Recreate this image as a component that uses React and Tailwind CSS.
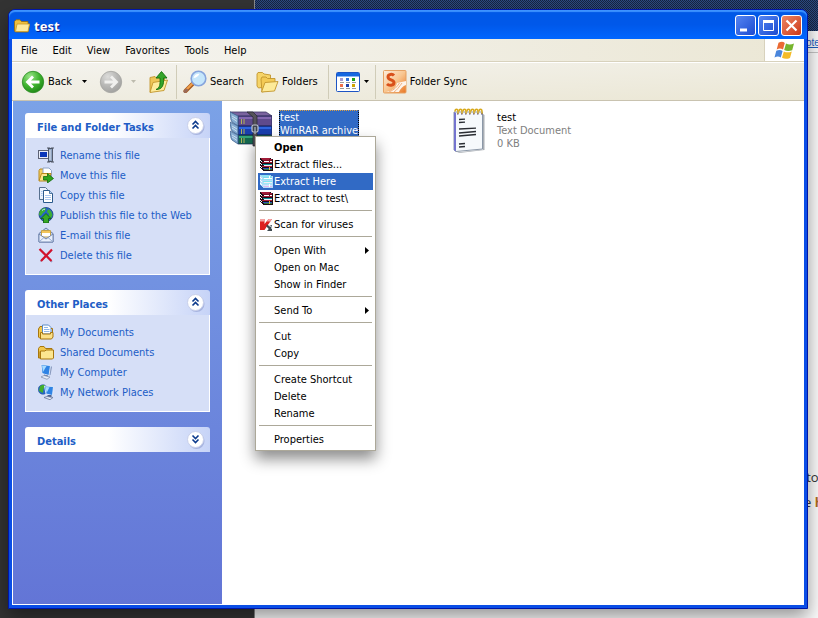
import React from 'react';

const tasks = [
  { label: 'Rename this file', icon: RenameIcon },
  { label: 'Move this file', icon: MoveIcon },
  { label: 'Copy this file', icon: CopyIcon },
  { label: 'Publish this file to the Web', icon: PublishIcon },
  { label: 'E-mail this file', icon: MailIcon },
  { label: 'Delete this file', icon: DeleteIcon },
];

const places = [
  { label: 'My Documents', icon: DocumentsIcon },
  { label: 'Shared Documents', icon: SharedIcon },
  { label: 'My Computer', icon: ComputerIcon },
  { label: 'My Network Places', icon: NetworkIcon },
];

const menuGroups = [
  [
    { label: 'Open', bold: true },
    { label: 'Extract files...', icon: BooksIcon },
    { label: 'Extract Here', icon: BooksIcon, active: true },
    { label: 'Extract to test\\', icon: BooksIcon },
  ],
  [{ label: 'Scan for viruses', icon: KasperskyIcon }],
  [{ label: 'Open With', submenu: true }, { label: 'Open on Mac' }, { label: 'Show in Finder' }],
  [{ label: 'Send To', submenu: true }],
  [{ label: 'Cut' }, { label: 'Copy' }],
  [{ label: 'Create Shortcut' }, { label: 'Delete' }, { label: 'Rename' }],
  [{ label: 'Properties' }],
];

/* ---------- small icons (16x16) ---------- */

function RenameIcon() {
  return (
    <svg width="16" height="16" viewBox="0 0 16 16" className="shrink-0">
      <rect x="0.5" y="3.5" width="10" height="8" fill="#e8ecf8" stroke="#5d6376" />
      <rect x="2" y="5" width="7" height="5" fill="#0a36b8" />
      <path d="M9 1h2.500l1 1 1-1H16M9 15h2.500l1-1 1 1H16" fill="none" stroke="#4b5260" strokeWidth="1.200" />
      <rect x="10.500" y="1.500" width="4" height="13" fill="#8fa2bf" stroke="#4b5260" strokeWidth="0.9" />
      <path d="M12 3v10" stroke="#dfe8f5" strokeWidth="1" />
    </svg>
  );
}

function MoveIcon() {
  return (
    <svg width="16" height="16" viewBox="0 0 16 16" className="shrink-0">
      <path d="M1 3.500l1-1.500h4l1 1.500v10H1z" fill="#f3cf62" stroke="#b98a1c" />
      <path d="M5 1h6l2.500 2.500V11H5z" fill="#fff" stroke="#8fa3c4" />
      <path d="M1 14l2.500-7.500H13l-2 7.500z" fill="#fbe58d" stroke="#b98a1c" />
      <path d="M5.500 9.500h4V6.500l6 5-6 4.500v-3h-4z" fill="#2fa51e" stroke="#136b0c" strokeWidth="0.8" />
    </svg>
  );
}

function CopyIcon() {
  return (
    <svg width="16" height="16" viewBox="0 0 16 16" className="shrink-0">
      <path d="M1.500 0.500h6l2 2v10h-8z" fill="#e9f1fd" stroke="#56708f" />
      <path d="M5.500 3.500h6l3 3v9h-9z" fill="#fff" stroke="#2c5a8c" />
      <path d="M11.500 3.500v3h3" fill="#bcd4f2" stroke="#2c5a8c" strokeWidth="0.8" />
      <path d="M7 8.500h6M7 10.500h6M7 12.500h6M3 4.500h1.500M3 6.500h1.500M3 8.500h1.500" stroke="#a9c6ee" />
    </svg>
  );
}

function PublishIcon() {
  return (
    <svg width="16" height="16" viewBox="0 0 16 16" className="shrink-0">
      <circle cx="8" cy="7.500" r="7" fill="#2563c9" stroke="#173c7c" strokeWidth="0.8" />
      <path d="M3 2.500c2-1.500 4-2 5-1l-1 3-2 1.500-2 3-2-1c0-2 .8-4.200 2-5.500zM10 2l3 2 1.500 4-2 4-2-2 .500-3-2-2z" fill="#3fae35" />
      <path d="M4 3.500c1-.9 2-1.300 3-1.300" stroke="#bfe6ff" fill="none" />
      <path d="M8 6.500l5 5h-2.500V16h-5v-4.500H3z" fill="#36a825" stroke="#0f5f0b" strokeWidth="0.8" />
    </svg>
  );
}

function MailIcon() {
  return (
    <svg width="16" height="16" viewBox="0 0 16 16" className="shrink-0">
      <path d="M1 6.500L8 1l7 5.500V15H1z" fill="#c3d6f5" stroke="#6a7fa8" />
      <path d="M3.500 3.500h9V10h-9z" fill="#fff" stroke="#c4a24d" />
      <path d="M4 4h8v2H4z" fill="#f3c65b" />
      <path d="M1 7l7 5 7-5v8H1z" fill="#eaf1fd" stroke="#6a7fa8" strokeWidth="0.9" />
      <path d="M1.500 14.500L6 10.500M14.500 14.500L10 10.500" stroke="#8ea5cf" strokeWidth="0.9" />
    </svg>
  );
}

function DeleteIcon() {
  return (
    <svg width="16" height="16" viewBox="0 0 16 16" className="shrink-0">
      <path d="M3 3l11 12M13.500 3.500L2.500 14.500" stroke="#8f9bc4" strokeWidth="1.500" />
      <path d="M1.500 2l12 12M14 2.500L3 14" stroke="#d3122b" strokeWidth="2.200" />
    </svg>
  );
}

function DocumentsIcon() {
  return (
    <svg width="16" height="16" viewBox="0 0 16 16" className="shrink-0">
      <path d="M.5 5l1.500-2.500h3V14H1.500l-1-1z" fill="#f1c84e" stroke="#a8770e" />
      <path d="M4.500 1h6L13 3.500V10H4.500z" fill="#fff" stroke="#5a8ac6" />
      <path d="M6 3.500h4M6 5.500h5.500M6 7.500h5.500" stroke="#8fb6e8" />
      <path d="M2.500 8.500h2v1.500h8V8.500H15V13l-1.500 2H2.500z" fill="#fbe089" stroke="#a8770e" />
      <path d="M13 4.500h1.500v4" fill="none" stroke="#a8770e" />
    </svg>
  );
}

function SharedIcon() {
  return (
    <svg width="16" height="16" viewBox="0 0 16 16" className="shrink-0">
      <path d="M.5 4.500L2 2.500h4l1.500 2h6.500v3H2V14H.5z" fill="#f1c84e" stroke="#a8770e" />
      <path d="M2.500 7h4.500l1-1h7.500v8l-1 1h-12z" fill="#fce690" stroke="#a8770e" />
    </svg>
  );
}

function ComputerIcon() {
  return (
    <svg width="16" height="16" viewBox="0 0 16 16" className="shrink-0">
      <path d="M12.500 1.500L14 3l-1.500 8-2 .500z" fill="#8798bd" />
      <path d="M3 .500l9.500 1-1.500 10-7-2z" fill="#2f83e4" stroke="#e6eefb" strokeWidth="0.9" />
      <path d="M4 1.500l4.500.500L5 8z" fill="#a9dcff" />
      <path d="M6 10.500l4 1v2l-4-.500z" fill="#6478a8" />
      <path d="M3 13l3-1.500 6 1.500-3 2.300z" fill="#e9eef8" stroke="#7d8cab" strokeWidth="0.7" />
    </svg>
  );
}

function NetworkIcon() {
  return (
    <svg width="16" height="16" viewBox="0 0 16 16" className="shrink-0">
      <circle cx="5" cy="5.500" r="4.800" fill="#2768c8" stroke="#1b4a90" strokeWidth="0.5" />
      <path d="M2 2.500c1.500-2 4.500-2 6 0L5.500 4.500 5 9 1 7z" fill="#42b02c" />
      <path d="M6.500 2l9 .500-1 9-6.500-1.500z" fill="#2f83e4" stroke="#e6eefb" strokeWidth="0.9" />
      <path d="M7.500 3l4 .300-3 5.700z" fill="#a9dcff" />
      <path d="M9.500 11h4v2.500h-4z" fill="#4f6290" />
      <path d="M6 13.500l3-1 6 1-3 2.200z" fill="#e9eef8" stroke="#66769a" strokeWidth="0.8" />
    </svg>
  );
}

function BooksIcon({ active }) {
  const [cover, spine, second, third, base] = active
    ? ['#8fe3f4', '#7fd8ee', '#7fe6f0', '#e3b5f0', '#b8dcf8']
    : ['#a01c38', '#7a1026', '#128f98', '#2f7a3c', '#1c0d14'];
  return (
    <svg width="14" height="14" viewBox="0 0 14 14" className="shrink-0" shapeRendering="crispEdges">
      <path d="M0 0h10l1 1h2v12H3v-1H2v-1H1v-1H0z" fill={base} />
      <path d="M1 0h9v1h2v1H2V1H1z" fill={cover} />
      <rect x="3" y="2" width="9" height="1" fill={spine} />
      <rect x="4" y="3" width="8" height="1" fill="#fff" />
      <rect x="2" y="4" width="10" height="1" fill={cover} />
      <rect x="3" y="6" width="9" height="1" fill={second} />
      <rect x="4" y="7" width="8" height="1" fill="#f3eef4" />
      <rect x="2" y="8" width="10" height="1" fill={active ? '#9fe8f6' : '#b02440'} />
      <rect x="3" y="10" width="9" height="1" fill={active ? '#cfeaff' : '#2f52b8'} />
      <rect x="4" y="11" width="8" height="1" fill={third} />
      <path d="M0 2h1v1h1v1H1V3H0zM0 5h1v1h1v1H1V6H0zM0 8h1v1h1v1H1V9H0z" fill="#fff" />
      <rect x="9" y="1" width="1" height="3" fill={active ? '#fff' : '#6c1024'} />
      <rect x="9" y="9" width="1" height="3" fill={active ? '#fff' : '#d8c24a'} />
    </svg>
  );
}

function KasperskyIcon() {
  return (
    <svg width="14" height="14" viewBox="0 0 14 14" className="shrink-0">
      <path d="M0 1h4.500v5L8.500 1h3.500L4.500 12H0z" fill="#dd1f1f" />
      <path d="M0 1h4.500v2.500H0zM8.500 1H12l-1.800 2.500H6.600z" fill="#f3a3a3" />
      <path d="M6 8l1.500-1.500L9 8l3-1v6H7l1.800-2z" fill="#3f4a50" />
      <path d="M9.500 8.500h2V11" fill="none" stroke="#b8c0c4" />
    </svg>
  );
}

/* ---------- window chrome icons ---------- */

function TitleFolder() {
  return (
    <svg width="16" height="14" viewBox="0 0 16 14" className="shrink-0">
      <path d="M.5 2.500L2 .800h4L7.500 2.500h6.500V5h1.500L14 13H1.500L.5 12z" fill="#eebf3d" stroke="#94690f" strokeWidth="0.8" />
      <path d="M1.500 12.500L3 5h12.500L14 12.500z" fill="#fdea9e" stroke="#c79a2a" strokeWidth="0.8" />
    </svg>
  );
}

function WindowsLogo() {
  return (
    <svg width="21" height="19" viewBox="0 0 21 19">
      <path d="M4.500 1.800C7 .500 9 .500 10.800 1.900L9 8.600C7 7.300 5 7.300 2.700 8.400z" fill="#ea6a33" />
      <path d="M12 2.500c2.500 1.400 5 1.300 8 .100L18.200 9.200c-3 1.200-5.500 1-8-.100z" fill="#77b52e" />
      <path d="M2.300 9.700c2.500-1.200 4.500-1 6.300.200L6.800 16.500C5 15.200 3 15.200.500 16.400z" fill="#4a86dc" />
      <path d="M9.800 10.400c2.500 1.300 5 1.200 8 0L16 17c-3 1.200-5.500 1.100-8-.200z" fill="#f5bb27" />
    </svg>
  );
}

function NavCircle({ forward }) {
  const id = forward ? 'fwd' : 'back';
  return (
    <svg width="24" height="24" viewBox="0 0 24 24" className="shrink-0">
      <defs>
        <radialGradient id={id} cx="0.35" cy="0.25" r="0.9">
          <stop offset="0" stopColor={forward ? '#dcdcda' : '#9be58a'} />
          <stop offset="0.5" stopColor={forward ? '#b6b6b4' : '#3fb32f'} />
          <stop offset="1" stopColor={forward ? '#9a9a98' : '#157a10'} />
        </radialGradient>
      </defs>
      <circle cx="12" cy="12" r="10.700" fill={`url(#${id})`} stroke={forward ? '#a5a5a1' : '#2a8a22'} strokeWidth="0.8" />
      <path
        d={forward ? 'M5.500 12H17M12 6.500l5.500 5.500-5.500 5.500' : 'M18.500 12H7M12 6.500L6.500 12l5.500 5.500'}
        fill="none"
        stroke={forward ? '#f0f0ee' : '#fff'}
        strokeWidth="2.800"
      />
    </svg>
  );
}

function UpFolder() {
  return (
    <svg width="21" height="24" viewBox="0 0 21 24" className="shrink-0">
      <path d="M2 7.500l5-1 1.500 1.500 8-1V19L2 22z" fill="#eec657" stroke="#c2952c" strokeWidth="0.9" />
      <path d="M2 22.500l3-10L19.500 10 16 20.500z" fill="#fdeb9b" stroke="#c2952c" strokeWidth="0.9" />
      <path d="M8 19.500c4-1.500 4.300-5 4-11.500H8L13.500 1.500l5.500 6.500h-3.500c.5 7-1 11.500-7.500 11.500z" fill="#35a52a" stroke="#14700f" strokeWidth="0.9" />
    </svg>
  );
}

function SearchIcon() {
  return (
    <svg width="24" height="24" viewBox="0 0 24 24" className="shrink-0">
      <path d="M2.500 21l8-8" stroke="#a3571c" strokeWidth="4" strokeLinecap="round" />
      <path d="M2.500 20.500l8-8" stroke="#f3a04a" strokeWidth="2.200" strokeLinecap="round" />
      <path d="M2 21.500l1.500-1.500" stroke="#9a6a58" strokeWidth="3" strokeLinecap="round" />
      <circle cx="15.500" cy="8.500" r="7.300" fill="#c5e6fb" stroke="#86a4dc" strokeWidth="1.600" />
      <path d="M10.500 8c.5-3 3-4.500 6-4.300-1 2.500-3.500 4.300-6 4.300z" fill="#fff" />
    </svg>
  );
}

function FoldersIcon() {
  return (
    <svg width="23" height="22" viewBox="0 0 23 22" className="shrink-0">
      <path d="M1 3l1-1.500h4.500L8 3l6.500 1v11L2.500 17 1 15z" fill="#f6d468" stroke="#c2952c" strokeWidth="0.9" />
      <path d="M5 8l1-2h4l1.500 1.500H19V18L6 21z" fill="#f3ca55" stroke="#c2952c" strokeWidth="0.9" />
      <path d="M5.500 21L9 11.500l13-1L18.500 20z" fill="#fdea98" stroke="#c2952c" strokeWidth="0.9" />
    </svg>
  );
}

function ViewsIcon() {
  const cells = ['#a89ad0', '#2f6fd6', '#19a01a', '#f0704a', '#1d3fa8', '#d0a400'];
  return (
    <svg width="24" height="20" viewBox="0 0 24 20" className="shrink-0">
      <rect x="0.5" y="0.5" width="23" height="19" rx="1" fill="#fff" stroke="#1d54c4" />
      <path d="M1 1h22v3.500H1z" fill="#1567e0" />
      {cells.map((color, i) => (
        <g key={color}>
          <rect x={4 + (i % 3) * 6} y={i < 3 ? 6 : 12} width="3" height="3" fill={color} />
          <rect x={4 + (i % 3) * 6} y={i < 3 ? 10 : 16} width="4" height="1" fill="#9a9a9a" />
        </g>
      ))}
    </svg>
  );
}

function FolderSyncIcon() {
  return (
    <svg width="24" height="24" viewBox="0 0 24 24" className="shrink-0">
      <defs>
        <linearGradient id="sync" x1="0" y1="0" x2="1" y2="1">
          <stop offset="0" stopColor="#fdeedd" />
          <stop offset="0.5" stopColor="#f9c690" />
          <stop offset="1" stopColor="#e97520" />
        </linearGradient>
      </defs>
      <rect x="0.5" y="0.5" width="22.500" height="22.500" rx="1" fill="url(#sync)" stroke="#e5a163" />
      <path d="M3 22c6-1 10-4 11-9l9-2v4c-3 1-6 4-7 7z" fill="#fdf3ea" />
      <path d="M6 22c5-2 8-5 10.500-9M11 22c3-2 5-5 8-9" stroke="#f0b181" fill="none" />
      <path d="M11 5.500C9.500 3.800 5 3.800 5 7c0 3.300 6 2.300 6 5.500 0 3.400-5 3.400-7 1.500" fill="none" stroke="#d9501a" strokeWidth="3" />
    </svg>
  );
}

/* ---------- file icons ---------- */

function RarIcon() {
  const rows = [
    { top: 5, bottom: 15, color: '#5f4a8c', light: '#8468b0' },
    { top: 15, bottom: 24, color: '#1a3fae', light: '#2f66e0' },
    { top: 24, bottom: 33, color: '#156a50', light: '#35a578' },
  ];
  return (
    <svg width="42" height="38" viewBox="0 0 42 38">
      <path d="M0 1h36l6 4-34 .500z" fill="#7a639e" stroke="#3c3866" strokeWidth="0.8" />
      {rows.map(({ top, bottom, color, light }) => (
        <g key={top}>
          <path d={`M8 ${top}h34v${bottom - top - 1}l-1 1H8z`} fill={color} stroke="#1b2450" strokeWidth="0.7" />
          <path d={`M9 ${top + 2}h32`} stroke={light} strokeWidth="2" />
          <path d={`M0 ${top - 4}l8 4v${bottom - top}l-6-4-1-2z`} fill="#84abd0" stroke="#3d6290" strokeWidth="0.8" />
          <path d={`M2 ${top}l5 3M2 ${top + 2}l5 3.500`} stroke="#cfe2f2" strokeWidth="0.9" />
          <path d={`M11.500 ${top + 3}v5M14 ${top + 3}v5`} stroke="#b3b25a" />
        </g>
      ))}
      <path d="M17 1h6l4 4v30h-4V6z" fill="#55525a" stroke="#26262e" strokeWidth="0.7" />
      <rect x="22" y="14" width="6" height="7" rx="1.500" fill="#3f4450" stroke="#c0c6ce" strokeWidth="1.200" />
      <path d="M25 16v7" stroke="#9ba3b0" strokeWidth="1.500" />
    </svg>
  );
}

function NotepadIcon() {
  return (
    <svg width="32" height="45" viewBox="0 0 32 45">
      <path d="M4 44.500l26-3V6l1.500 1v35L6 45z" fill="#a9aeb4" />
      <path d="M1 4h28.500v37L3 43.500 1 42z" fill="#f6f9fc" stroke="#8c98a8" />
      <path d="M1 4l2 1v38.500L1 42z" fill="#7474cf" />
      {[4, 8, 12, 16, 20, 24, 28].map((x) => (
        <g key={x}>
          <path d={`M${x - 2} 3.500c0-3 3-3 3 0V6`} fill="none" stroke="#d8a91c" strokeWidth="1.500" />
          <path d={`M${x} 6h1.500`} stroke="#5a4a7a" />
        </g>
      ))}
      <path d="M6 11.500l6-.300M6 14.500l6-.300M6 25l17-1.500M6 21l17-.800M6 28l17-1.500M6 36l6-.500M6 39l6-.500" stroke="#2a2d33" strokeWidth="1.300" />
    </svg>
  );
}

function Chevrons({ down }) {
  return (
    <svg width="20" height="20" viewBox="0 0 20 20">
      <circle cx="10.500" cy="11" r="8" fill="#8f9ccf" opacity="0.6" />
      <circle cx="9.500" cy="9.500" r="8" fill="#fff" stroke="#c9d0ea" />
      <path
        d={down ? 'M6.500 5.500l3 3 3-3M6.500 9.500l3 3 3-3' : 'M6.500 8.500l3-3 3 3M6.500 12.500l3-3 3 3'}
        fill="none"
        stroke="#0c3a8c"
        strokeWidth="1.600"
      />
    </svg>
  );
}

function DropArrow({ className }) {
  return (
    <svg width="5" height="3" viewBox="0 0 5 3" className={className}>
      <path d="M0 0h5L2.500 3z" fill="currentColor" />
    </svg>
  );
}

/* ---------- layout pieces ---------- */

const TitleButton = ({ label, color, children }) => (
  <button
    aria-label={label}
    className={`flex h-[21px] w-[21px] items-center justify-center rounded-[3px] border border-white ${color}`}
  >
    <svg width="19" height="19" viewBox="0 0 19 19" fill="none" stroke="#fff">
      {children}
    </svg>
  </button>
);

const Panel = ({ title, items }) => (
  <section>
    <h2 className="flex h-[25px] items-center justify-between rounded-t-[3px] bg-linear-to-r from-white from-45% to-[#c6d3f7] pr-1 pl-3 font-bold text-[#215dc6]">
      <span className="pt-1">{title}</span>
      <button aria-label={`Toggle ${title}`}>
        <Chevrons down={!items} />
      </button>
    </h2>
    {items && (
      <ul className="border border-t-0 border-white bg-[#d6dff7] pt-[7px] pb-[9px] pl-3">
        {items.map(({ label, icon: Icon }) => (
          <li key={label} className="h-5">
            <a href="#" className="flex h-5 items-center gap-1.5 text-[#215dc6]">
              <Icon />
              {label}
            </a>
          </li>
        ))}
      </ul>
    )}
  </section>
);

const ContextMenu = () => (
  <div
    role="menu"
    className="absolute top-[35px] left-[33px] w-[121px] border border-[#aca899] bg-white p-0.5 shadow-[0_8px_14px_rgba(0,0,0,0.45)]"
  >
    {menuGroups.map((group, i) => (
      <div key={i} role="group">
        {i > 0 && <div className="mx-px mt-[3px] mb-[5px] h-px bg-[#aca899]" />}
        {group.map(({ label, icon: Icon, bold, active, submenu }) => (
          <button
            key={label}
            role="menuitem"
            className={`flex h-[17px] w-full items-center pr-1 pl-0.5 text-left whitespace-nowrap ${
              active ? 'bg-[#316ac5] text-white' : 'text-black'
            } ${bold ? 'font-bold' : ''}`}
          >
            <span className="w-3.5 shrink-0">{Icon && <Icon active={active} />}</span>
            <span className="flex-1">{label}</span>
            {submenu && (
              <svg width="4" height="7" viewBox="0 0 4 7">
                <path d="M0 0l4 3.500L0 7z" fill="#000" />
              </svg>
            )}
          </button>
        ))}
      </div>
    ))}
  </div>
);

// Desktop and the browser page that stick out around the window
const Backdrop = () => (
  <div className="absolute inset-0 flex bg-[#333333]" aria-hidden="true">
    <div className="w-[254px]" />
    <div className="flex flex-1 flex-col border-l border-[#8a8a8a] bg-[#fafafa]">
      <div className="h-[31px] bg-[repeating-conic-gradient(#16233f_0_25%,#2c4a80_0_50%)] bg-size-[2px_2px]" />
      <div className="ml-auto w-[18px] flex-1 whitespace-nowrap font-['Open_Sans',sans-serif] text-[13px] text-[#333]">
        <div className="h-[22px] border-b border-[#c4c4c4] pt-1 pl-1.5 font-['Liberation_Sans',sans-serif] text-[10px] leading-4 text-[#1a5fc0] underline">
          ote
        </div>
        <p className="pt-[412px] leading-[25px]">cto</p>
        <p className="pl-1 leading-[25px]">
          e <b className="text-[#b06a20]">h</b>
        </p>
      </div>
    </div>
  </div>
);

export default function App() {
  return (
    <div className="relative flex h-screen overflow-hidden pt-[9px] pr-2.5 pb-[9px] pl-2 font-['DejaVu_Sans_Condensed','DejaVu_Sans',sans-serif] text-[11px] leading-[13px] text-black">
      <Backdrop />

      <div className="relative flex min-w-0 flex-1 flex-col rounded-t-[7px] border border-[#0016a8] bg-[#0a4ee6] px-[3px] pb-[3px] shadow-[0_8px_18px_rgba(0,0,0,0.4)]">
        {/* Title bar */}
        <header className="-mx-[3px] flex h-[29px] shrink-0 items-center gap-1 rounded-t-[6px] bg-linear-to-b from-[#0058e6] via-[#0058ea] to-[#0066ff] pt-0.5 pr-[5px] pl-[5px] shadow-[inset_0_2px_1px_#3c93ff]">
          <TitleFolder />
          <h1 className="flex-1 font-['Noto_Sans','Open_Sans',sans-serif] text-[13px] leading-4 font-bold text-white [text-shadow:1px_1px_0_#0a1883]">
            test
          </h1>
          <div className="flex gap-0.5">
            <TitleButton label="Minimize" color="bg-linear-to-br from-[#5585f2] to-[#1c4ad0]">
              <path d="M4 14h7" strokeWidth="3" />
            </TitleButton>
            <TitleButton label="Maximize" color="bg-linear-to-br from-[#5585f2] to-[#1c4ad0]">
              <path d="M4.500 4v10.500h10V4" />
              <path d="M4 5.500h11" strokeWidth="3" />
            </TitleButton>
            <TitleButton label="Close" color="bg-linear-to-br from-[#ec8462] to-[#cc3614]">
              <path d="M4.500 4.500l10 10M14.500 4.500l-10 10" strokeWidth="2.200" />
            </TitleButton>
          </div>
        </header>

        {/* Menu bar */}
        <nav className="flex h-6 shrink-0 border-b border-white bg-linear-to-r from-[#f6f5f2] to-[#ebe7d5]">
          <div className="flex flex-1 items-center gap-[15px] border-b border-[#d8d2bd] pl-[9px]">
            {['File', 'Edit', 'View', 'Favorites', 'Tools', 'Help'].map((item) => (
              <button key={item}>{item}</button>
            ))}
          </div>
          <div className="flex w-10 items-center justify-center border-b border-l border-[#d8d2bd] bg-white">
            <WindowsLogo />
          </div>
        </nav>

        {/* Toolbar */}
        <div className="flex h-[38px] shrink-0 items-center border-b border-[#c9c3b0] bg-linear-to-br from-[#f4f3ee] to-[#ebe7d5] pl-[9px]">
          <button className="flex items-center gap-[3px]">
            <NavCircle />
            Back
          </button>
          <DropArrow className="ml-2.5" />
          <button aria-label="Forward" className="ml-3">
            <NavCircle forward />
          </button>
          <DropArrow className="ml-2 text-[#bdbbae]" />
          <button aria-label="Up" className="ml-3">
            <UpFolder />
          </button>
          <div className="mr-1.5 ml-[7px] h-[34px] w-px bg-[#d0ccb8]" />
          <button className="flex items-center gap-[3px]">
            <SearchIcon />
            Search
          </button>
          <button className="ml-3 flex items-center gap-[3px]">
            <FoldersIcon />
            Folders
          </button>
          <div className="mr-[7px] ml-2.5 h-[34px] w-px bg-[#d0ccb8]" />
          <button aria-label="Views" className="flex items-center gap-1">
            <ViewsIcon />
            <DropArrow />
          </button>
          <div className="mr-[7px] ml-1.5 h-[34px] w-px bg-[#d0ccb8]" />
          <button className="flex items-center gap-[3px]">
            <FolderSyncIcon />
            Folder Sync
          </button>
        </div>

        {/* Client area */}
        <div className="flex min-h-0 flex-1 border-b border-l border-white bg-white">
          <aside className="flex w-[209px] shrink-0 flex-col gap-[15px] bg-linear-to-b from-[#7ba2e7] to-[#6375d6] px-3 pt-3">
            <Panel title="File and Folder Tasks" items={tasks} />
            <Panel title="Other Places" items={places} />
            <Panel title="Details" />
          </aside>

          <main className="relative flex-1 pt-[5px] pl-[5px]">
            <ul className="flex">
              <li className="flex w-[218px] gap-1">
                <div className="flex h-12 w-12 items-center justify-center">
                  <RarIcon />
                </div>
                <p className="mt-1 self-start border border-b-0 border-dotted border-black border-t-[#e0a040] bg-[#316ac5] text-white">
                  test
                  <br />
                  WinRAR archive
                </p>
              </li>
              <li className="flex w-[218px] gap-1">
                <div className="flex h-12 w-12 items-center justify-center">
                  <NotepadIcon />
                </div>
                <p className="mt-[5px] self-start text-[#808080]">
                  <span className="text-black">test</span>
                  <br />
                  Text Document
                  <br />0 KB
                </p>
              </li>
            </ul>
            <ContextMenu />
          </main>
        </div>
      </div>
    </div>
  );
}
